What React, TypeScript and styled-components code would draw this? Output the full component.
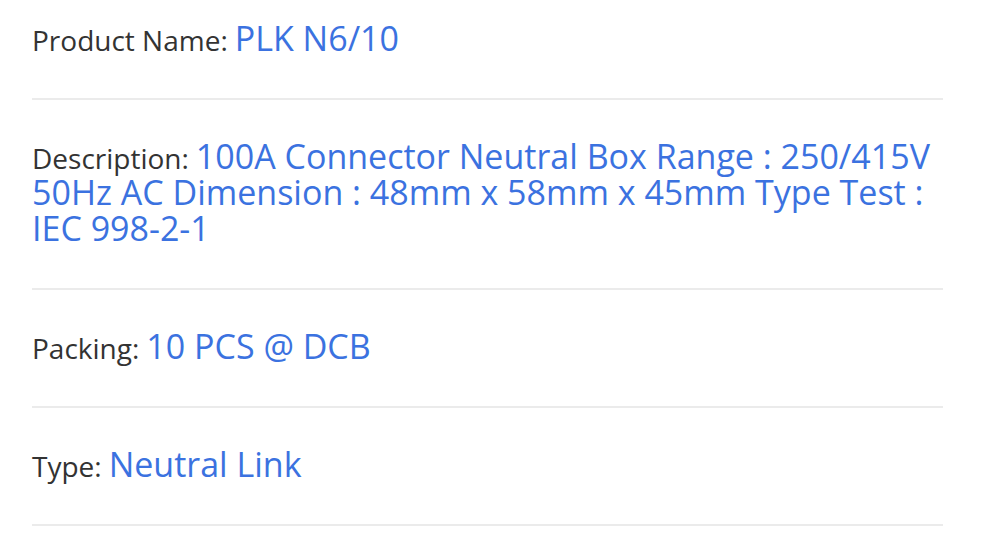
import React from "react";
import styled, { createGlobalStyle } from "styled-components";

const Global = createGlobalStyle`
  html, body { margin: 0; padding: 0; background: #ffffff; }
  body { font-family: "Open Sans", "Liberation Sans", sans-serif; }
`;

const List = styled.div`
  margin: 0 41px 0 32px;
  display: flex;
  flex-direction: column;
`;

const Row = styled.div`
  padding: 38px 0 42px;
  border-bottom: 2px solid #ebebeb;
  font-size: 34px;
  line-height: 36px;
  color: #3b72e0;
  &:first-child { padding-top: 20px; }
`;

const Label = styled.span`
  font-size: 28px;
  line-height: 28px;
  color: #333333;
  margin-right: 7px;
`;

const Value = styled.span`
  color: #3b72e0;
`;

const items = [
  { label: "Product Name:", value: "PLK N6/10" },
  {
    label: "Description:",
    value:
      "100A Connector Neutral Box Range : 250/415V 50Hz AC Dimension : 48mm x 58mm x 45mm Type Test : IEC 998-2-1",
  },
  { label: "Packing:", value: "10 PCS @ DCB" },
  { label: "Type:", value: "Neutral Link" },
];

export default function App() {
  return (
    <>
      <Global />
      <List>
        {items.map((it) => (
          <Row key={it.label}>
            <Label>{it.label}</Label>
            <Value>{it.value}</Value>
          </Row>
        ))}
      </List>
    </>
  );
}
